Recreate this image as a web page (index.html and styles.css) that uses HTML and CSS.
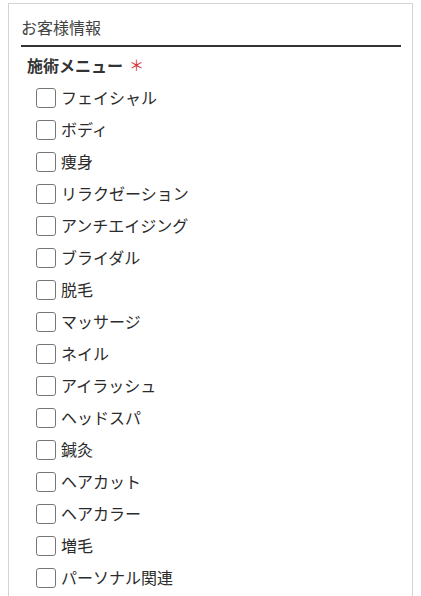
FILE: index.html
```html
<!DOCTYPE html>
<html lang="ja">
<head>
<meta charset="utf-8">
<title>お客様情報</title>
<link rel="stylesheet" href="styles.css">
</head>
<body>
<div class="card">
  <div class="card-head">お客様情報</div>
  <div class="field">
    <div class="field-label">施術メニュー<span class="req">＊</span></div>
    <ul class="options">
      <li class="opt"><span class="box"></span><span class="txt">フェイシャル</span></li>
      <li class="opt"><span class="box"></span><span class="txt">ボディ</span></li>
      <li class="opt"><span class="box"></span><span class="txt">痩身</span></li>
      <li class="opt"><span class="box"></span><span class="txt">リラクゼーション</span></li>
      <li class="opt"><span class="box"></span><span class="txt">アンチエイジング</span></li>
      <li class="opt"><span class="box"></span><span class="txt">ブライダル</span></li>
      <li class="opt"><span class="box"></span><span class="txt">脱毛</span></li>
      <li class="opt"><span class="box"></span><span class="txt">マッサージ</span></li>
      <li class="opt"><span class="box"></span><span class="txt">ネイル</span></li>
      <li class="opt"><span class="box"></span><span class="txt">アイラッシュ</span></li>
      <li class="opt"><span class="box"></span><span class="txt">ヘッドスパ</span></li>
      <li class="opt"><span class="box"></span><span class="txt">鍼灸</span></li>
      <li class="opt"><span class="box"></span><span class="txt">ヘアカット</span></li>
      <li class="opt"><span class="box"></span><span class="txt">ヘアカラー</span></li>
      <li class="opt"><span class="box"></span><span class="txt">増毛</span></li>
      <li class="opt"><span class="box"></span><span class="txt">パーソナル関連</span></li>
    </ul>
  </div>
</div>
</body>
</html>
```
FILE: styles.css
```css
html, body {
  margin: 0;
  padding: 0;
  background: #fff;
}
body {
  font-family: "Noto Sans CJK JP", "Noto Sans", sans-serif;
  color: #333;
  padding: 3px 0 0 8px;
}
.card {
  width: 405px;
  box-sizing: border-box;
  border: 1px solid #d4d4d4;
  border-bottom: none;
  min-height: 600px;
  padding: 0 11px 0 12px;
}
.card-head {
  font-size: 16px;
  line-height: 24px;
  padding: 11px 0 6px;
  border-bottom: 2px solid #333;
  color: #444;
}
.field {
  padding-left: 6px;
}
.field-label {
  margin-top: 6px;
  font-size: 16px;
  line-height: 24px;
  font-weight: bold;
  color: #333;
  display: flex;
  align-items: center;
}
.req {
  color: #d9383a;
  font-weight: normal;
  font-size: 15px;
  margin-left: 6px;
}
.options {
  list-style: none;
  margin: 5px 0 0;
  padding: 0 0 0 9px;
}
.opt {
  height: 32px;
  display: flex;
  align-items: center;
  gap: 5px;
}
.box {
  width: 20px;
  height: 20px;
  box-sizing: border-box;
  border: 1px solid #767676;
  border-radius: 3px;
  background: #fff;
  flex: none;
}
.txt {
  font-size: 16px;
  line-height: 24px;
  padding-bottom: 2px;
  color: #2b2b2b;
}
```
